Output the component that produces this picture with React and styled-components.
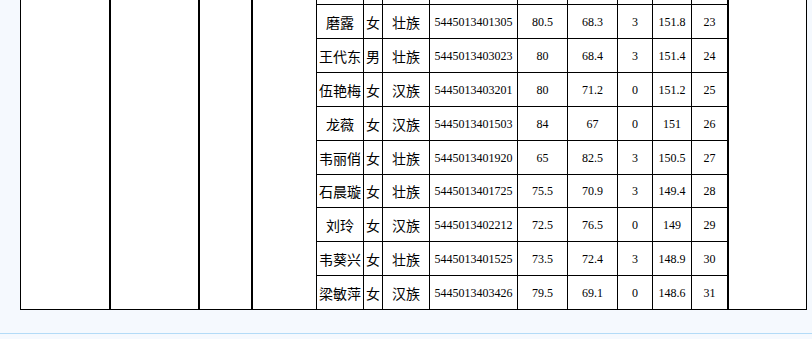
import React from "react";
import styled, { createGlobalStyle } from "styled-components";

const rows = [
  ["磨露", "女", "壮族", "5445013401305", "80.5", "68.3", "3", "151.8", "23"],
  ["王代东", "男", "壮族", "5445013403023", "80", "68.4", "3", "151.4", "24"],
  ["伍艳梅", "女", "汉族", "5445013403201", "80", "71.2", "0", "151.2", "25"],
  ["龙薇", "女", "汉族", "5445013401503", "84", "67", "0", "151", "26"],
  ["韦丽俏", "女", "壮族", "5445013401920", "65", "82.5", "3", "150.5", "27"],
  ["石晨璇", "女", "壮族", "5445013401725", "75.5", "70.9", "3", "149.4", "28", 32],
  ["刘玲", "女", "汉族", "5445013402212", "72.5", "76.5", "0", "149", "29"],
  ["韦葵兴", "女", "壮族", "5445013401525", "73.5", "72.4", "3", "148.9", "30"],
  ["梁敏萍", "女", "汉族", "5445013403426", "79.5", "69.1", "0", "148.6", "31"],
];

// widths include the right border of each cell
const leftCols = [90, 89, 53, 64];
const dataCols = [47, 19, 47, 88, 50, 50, 35, 39, 37];
const cjkCols = [0, 1, 2];

const GlobalStyle = createGlobalStyle`
  html, body {
    margin: 0;
    padding: 0;
    background: #f5f9fe;
    overflow: hidden;
  }
`;

const Page = styled.div`
  padding: 0 0 22px 20px;
  border-bottom: 1px solid #b3dbf7;
  height: 311px;
`;

const Sheet = styled.table`
  border-collapse: separate;
  border-spacing: 0;
  table-layout: fixed;
  width: 787px;
  background: #fff;
  border-left: 1px solid #000;
  box-sizing: border-box;
`;

const Cell = styled.td`
  box-sizing: border-box;
  width: ${(p) => p.$w}px;
  height: ${(p) => p.$h}px;
  padding: 0;
  border-right: ${(p) => (p.$thick ? 2 : 1)}px solid #000;
  border-bottom: 1px solid #000;
  text-align: center;
  vertical-align: middle;
  white-space: nowrap;
  overflow: hidden;
  color: #000;
  font-family: ${(p) =>
    p.$cjk
      ? `"Noto Sans CJK SC", sans-serif`
      : `"Liberation Serif", "Times New Roman", serif`};
  font-size: ${(p) => (p.$cjk ? 14 : 12)}px;
  line-height: 16px;
`;

export default function App() {
  return (
    <>
      <GlobalStyle />
      <Page>
        <Sheet>
          <tbody>
            <tr>
              {leftCols.map((w, i) => (
                <Cell key={i} rowSpan={rows.length + 1} $w={w} $thick={i < 3} />
              ))}
              {dataCols.map((w, i) => (
                <Cell key={i} $w={w} $h={5} $thick={i === dataCols.length - 1} />
              ))}
              <Cell rowSpan={rows.length + 1} $w={78} />
            </tr>
            {rows.map((r) => (
              <tr key={r[8]}>
                {r.slice(0, 9).map((v, i) => (
                  <Cell
                    key={i}
                    $h={r[9] ? r[9] + 1 : 34}
                    $cjk={cjkCols.includes(i)}
                    $thick={i === 8}
                  >
                    {v}
                  </Cell>
                ))}
              </tr>
            ))}
          </tbody>
        </Sheet>
      </Page>
    </>
  );
}
